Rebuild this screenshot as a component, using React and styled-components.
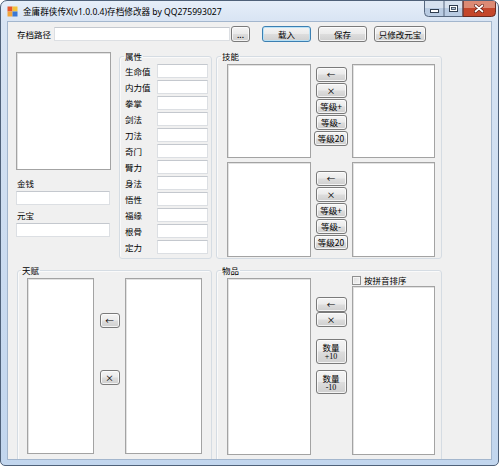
import React from 'react';
import styled, { createGlobalStyle } from 'styled-components';

const GlobalStyle = createGlobalStyle`
  html, body {
    margin: 0;
    padding: 0;
    background: #ffffff;
  }
  body {
    font-family: 'Noto Sans CJK SC', sans-serif;
    font-size: 8.5px;
    color: #000;
  }
`;

const CaptionButtons = () => (
  <CaptionSvg width="72" height="16" viewBox="0 0 72 16">
    <path d="M0.5 -1 V11.5 Q0.5 15.5 4.5 15.5 H39 V-1 Z" fill="#b9cbe2" />
    <rect x="1" y="0" width="38" height="7" fill="#d6e1ef" />
    <path d="M39 -1 V15.5 H67.5 Q71.5 15.5 71.5 11.5 V-1 Z" fill="#c4462b" />
    <rect x="39.5" y="0" width="31.5" height="7" fill="#dc8a74" />
    <path d="M0.5 -1 V11.5 Q0.5 15.5 4.5 15.5 H39 V-1" fill="none" stroke="#56677f" />
    <path d="M20 -1 V15.5" stroke="#56677f" />
    <path d="M39 -1 V15.5 H67.5 Q71.5 15.5 71.5 11.5 V-1" fill="none" stroke="#6b2a20" />
    <rect x="6.5" y="8.5" width="8" height="3" fill="#fff" stroke="#2f3d4f" />
    <rect x="25.5" y="4.5" width="8" height="6" fill="#fff" stroke="#2f3d4f" />
    <rect x="27.5" y="6.5" width="4" height="2" fill="#b7c8dd" stroke="#2f3d4f" strokeWidth="0.8" />
    <path d="M51.5 4.5 L58.5 10.5 M58.5 4.5 L51.5 10.5" stroke="#5a1a10" strokeWidth="3" strokeLinecap="round" />
    <path d="M51.5 4.5 L58.5 10.5 M58.5 4.5 L51.5 10.5" stroke="#fff" strokeWidth="1.7" strokeLinecap="round" />
  </CaptionSvg>
);

const App = () => {
  const attrs = ['生命值', '内力值', '拳掌', '剑法', '刀法', '奇门', '臂力', '身法', '悟性', '福缘', '根骨', '定力'];

  return (
    <Window>
      <GlobalStyle />
      <TitleBar>
        <AppIcon viewBox="0 0 11 11">
          <rect x="0.5" y="0.5" width="5" height="5" fill="#e8562a" />
          <rect x="5.5" y="0.5" width="5" height="5" fill="#f3c23a" />
          <rect x="0.5" y="5.5" width="5" height="5" fill="#f3a53a" />
          <rect x="5.5" y="5.5" width="5" height="5" fill="#3a78d4" />
        </AppIcon>
        <Title>金庸群侠传X(v1.0.0.4)存档修改器 by QQ275993027</Title>
        <CaptionButtons />
      </TitleBar>

      <Client>
        <PathRow>
          <PathLabel>存档路径</PathLabel>
          <TextBox $w={176} $h={14} />
          <WinButton $w={19} $h={16} $ml={1}>...</WinButton>
          <WinButton $w={49} $h={16} $ml={12} $default>载入</WinButton>
          <WinButton $w={49} $h={16} $ml={7}>保存</WinButton>
          <WinButton $w={52} $h={16} $ml={7}>只修改元宝</WinButton>
        </PathRow>

        <MiddleRow>
          <LeftColumn>
            <ListBox $w={95} $h={118} />
            <SideLabel $mt={7}>金钱</SideLabel>
            <TextBox $w={94} $h={14} $mt={2} />
            <SideLabel $mt={4}>元宝</SideLabel>
            <TextBox $w={94} $h={14} $mt={2} />
          </LeftColumn>

          <Group $w={93} $h={209} $pl={5} $pr={3}>
            <Legend $ml={-1}>属性</Legend>
            <AttrGrid>
              {attrs.map((a) => (
                <React.Fragment key={a}>
                  <AttrLabel>{a}</AttrLabel>
                  <TextBox $w={51} $h={14} />
                </React.Fragment>
              ))}
            </AttrGrid>
          </Group>

          <Group $w={226} $h={209} $pl={10} $pr={6} $ml={4}>
            <Legend $ml={-6}>技能</Legend>
            <SkillStack>
              {[{ h: 94, pt: 3 }, { h: 95, pt: 9 }].map((r, i) => (
                <PairRow key={i}>
                  <ListBox $w={84} $h={r.h} />
                  <ButtonColumn $w={36} $pt={r.pt} $ml={2}>
                    <WinButton $w={31} $h={15}>←</WinButton>
                    <WinButton $w={31} $h={15} $mt={1}>×</WinButton>
                    <WinButton $w={31} $h={15} $mt={1}>等级+</WinButton>
                    <WinButton $w={31} $h={15} $mt={1}>等级-</WinButton>
                    <WinButton $w={34} $h={15} $mt={1}>等级20</WinButton>
                  </ButtonColumn>
                  <ListBox $w={83} $h={r.h} $ml={3} />
                </PairRow>
              ))}
            </SkillStack>
          </Group>
        </MiddleRow>

        <BottomRow>
          <Group $w={195} $h={220} $pl={9} $pr={9} $ml={1}>
            <Legend $ml={-6}>天赋</Legend>
            <PairRow>
              <ListBox $w={67} $h={176} />
              <ButtonColumn $w={31} $pt={35}>
                <WinButton $w={20} $h={15}>←</WinButton>
                <WinButton $w={20} $h={15} $mt={42}>×</WinButton>
              </ButtonColumn>
              <ListBox $w={77} $h={176} />
            </PairRow>
          </Group>

          <Group $w={226} $h={220} $pl={10} $pr={6} $ml={4}>
            <Legend $ml={-6}>物品</Legend>
            <PairRow>
              <ListBox $w={84} $h={177} />
              <ButtonColumn $w={36} $pt={19} $ml={2}>
                <WinButton $w={31} $h={15}>←</WinButton>
                <WinButton $w={31} $h={15}>×</WinButton>
                <WinButton $w={31} $h={25} $mt={12} $stack>
                  <StackTop>数量</StackTop>
                  <StackBottom>+10</StackBottom>
                </WinButton>
                <WinButton $w={31} $h={24} $mt={6} $stack>
                  <StackTop>数量</StackTop>
                  <StackBottom>-10</StackBottom>
                </WinButton>
              </ButtonColumn>
              <ItemColumn>
                <CheckRow>
                  <CheckBox />
                  <span>按拼音排序</span>
                </CheckRow>
                <ListBox $w={83} $h={169} />
              </ItemColumn>
            </PairRow>
          </Group>
        </BottomRow>
      </Client>
    </Window>
  );
};

export default App;

// Styled Components

const Window = styled.div`
  width: 499px;
  height: 466px;
  box-sizing: border-box;
  border: 1px solid #4f6179;
  border-radius: 7px 7px 5px 5px;
  background: linear-gradient(to bottom, #e6eef9 0px, #d8e4f3 21px, #cadbf0 60%, #c2d6ee 100%);
  display: flex;
  flex-direction: column;
  overflow: hidden;
`;

const TitleBar = styled.div`
  height: 21px;
  flex: none;
  display: flex;
  align-items: center;
  padding-left: 6px;
`;

const AppIcon = styled.svg`
  width: 11px;
  height: 11px;
  flex: none;
`;

const Title = styled.div`
  margin-left: 5px;
  font-family: 'Noto Sans', 'Noto Sans CJK SC', sans-serif;
  font-size: 8.6px;
  color: #000;
  white-space: nowrap;
`;

const CaptionSvg = styled.svg`
  flex: none;
  margin-left: auto;
  margin-right: 2px;
  align-self: flex-start;
  display: block;
`;

const Client = styled.div`
  margin: 0 7px 6px 7px;
  height: 437px;
  flex: none;
  box-sizing: border-box;
  background: #f0f0f0;
  box-shadow: 0 0 0 1px #a3b6cd;
  overflow: hidden;
  padding: 4px 0 0 8px;
  display: flex;
  flex-direction: column;
`;

const PathRow = styled.div`
  display: flex;
  align-items: center;
  height: 16px;
  padding-left: 1px;
`;

const PathLabel = styled.div`
  width: 37px;
  line-height: 12px;
  white-space: nowrap;
`;

const TextBox = styled.div`
  width: ${(p) => p.$w}px;
  height: ${(p) => p.$h}px;
  margin-top: ${(p) => p.$mt || 0}px;
  box-sizing: border-box;
  background: #ffffff;
  border: 1px solid #dcdfe3;
  border-top-color: #c4c8ce;
  flex: none;
`;

const ListBox = styled.div`
  width: ${(p) => p.$w}px;
  height: ${(p) => p.$h}px;
  margin-left: ${(p) => p.$ml || 0}px;
  box-sizing: border-box;
  background: #ffffff;
  border: 1px solid #a3a3a3;
  box-shadow: inset 1px 1px 0 #e2e2e2;
  flex: none;
`;

const WinButton = styled.button`
  width: ${(p) => p.$w}px;
  height: ${(p) => p.$h}px;
  margin: ${(p) => p.$mt || 0}px 0 0 ${(p) => p.$ml || 0}px;
  padding: 0;
  flex: none;
  box-sizing: border-box;
  border: 1px solid ${(p) => (p.$default ? '#3c7fb1' : '#7a7a7a')};
  border-radius: 3px;
  background: linear-gradient(to bottom, #f4f4f4 0%, #ebebeb 48%, #dddddd 52%, #cfcfcf 100%);
  box-shadow: inset 0 0 0 1px ${(p) => (p.$default ? 'rgba(180, 225, 248, 0.9)' : 'rgba(255, 255, 255, 0.75)')};
  font-family: 'Noto Sans CJK SC', sans-serif;
  font-size: 8.5px;
  line-height: 1;
  color: #000;
  display: flex;
  flex-direction: ${(p) => (p.$stack ? 'column' : 'row')};
  align-items: center;
  justify-content: center;
  white-space: nowrap;
`;

const StackTop = styled.span`
  display: block;
  height: 10px;
  line-height: 10px;
`;

const StackBottom = styled.span`
  display: block;
  height: 9px;
  line-height: 9px;
  font-family: 'Liberation Serif', serif;
  font-size: 8px;
`;

const MiddleRow = styled.div`
  display: flex;
  align-items: flex-start;
  margin-top: 8px;
  height: 209px;
  flex: none;
`;

const LeftColumn = styled.div`
  width: 95px;
  padding-top: 2px;
  margin-right: 8px;
  display: flex;
  flex-direction: column;
`;

const SideLabel = styled.div`
  height: 12px;
  line-height: 12px;
  padding-left: 1px;
  margin-top: ${(p) => p.$mt}px;
`;

const Group = styled.fieldset`
  margin: 0 0 0 ${(p) => p.$ml || 0}px;
  width: ${(p) => p.$w}px;
  height: ${(p) => p.$h}px;
  box-sizing: border-box;
  padding: 2px ${(p) => p.$pr}px 0 ${(p) => p.$pl}px;
  border: 1px solid #d5dce3;
  border-radius: 3px;
  box-shadow: inset 1px 1px 0 #fafafa;
  min-width: 0;
  flex: none;
`;

const Legend = styled.legend`
  padding: 0 1px;
  margin-left: ${(p) => p.$ml}px;
  font-size: 8.5px;
  line-height: 12px;
`;

const AttrGrid = styled.div`
  display: grid;
  grid-template-columns: 32px 51px;
  grid-auto-rows: 14px;
  row-gap: 2px;
  align-items: center;
`;

const AttrLabel = styled.div`
  white-space: nowrap;
  line-height: 12px;
`;

const SkillStack = styled.div`
  display: flex;
  flex-direction: column;
  gap: 4px;
`;

const PairRow = styled.div`
  display: flex;
  align-items: flex-start;
`;

const ButtonColumn = styled.div`
  width: ${(p) => p.$w}px;
  padding-top: ${(p) => p.$pt}px;
  margin-left: ${(p) => p.$ml || 0}px;
  display: flex;
  flex-direction: column;
  align-items: center;
  flex: none;
`;

const ItemColumn = styled.div`
  margin-top: -3px;
  margin-left: 3px;
  display: flex;
  flex-direction: column;
`;

const CheckRow = styled.div`
  height: 11px;
  display: flex;
  align-items: center;
  gap: 3px;
  line-height: 11px;
  white-space: nowrap;
`;

const CheckBox = styled.span`
  width: 9px;
  height: 9px;
  box-sizing: border-box;
  border: 1px solid #8e8f8f;
  background: linear-gradient(135deg, #dcdcdc 0%, #f6f6f6 100%);
  box-shadow: inset 0 0 0 1px #f4f4f4;
  flex: none;
`;

const BottomRow = styled.div`
  display: flex;
  align-items: flex-start;
  margin-top: 5px;
`;
